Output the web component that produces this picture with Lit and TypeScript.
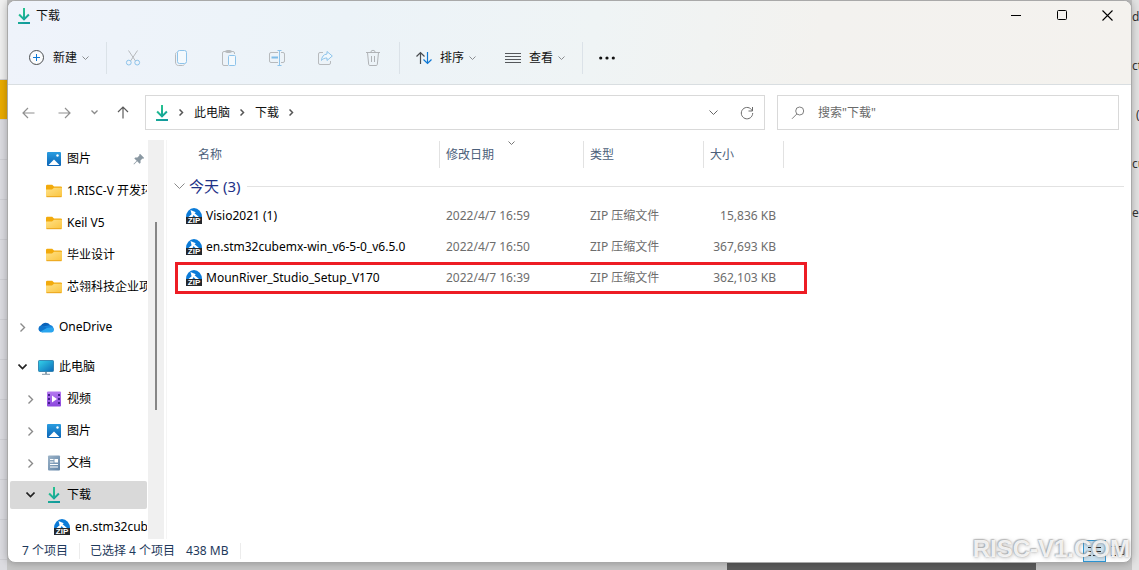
import { LitElement, html, svg, css, nothing, TemplateResult } from "lit";
import { customElement, property, state } from "lit/decorators.js";
import { classMap } from "lit/directives/class-map.js";

const glyph = (w: number, h: number, body: unknown) =>
  html`<svg width=${w} height=${h} viewBox="0 0 ${w} ${h}" fill="none" aria-hidden="true">${body}</svg>`;

const chevron = (dir: "down" | "right", size: number, color: string, weight = 1) => {
  const h = size / 2;
  const d = dir === "down" ? `M0.5 0.5 L${h + 0.5} ${h + 0.5} L${size + 0.5} 0.5` : `M0.5 0.5 L${h + 0.5} ${h + 0.5} L0.5 ${size + 0.5}`;
  return dir === "down"
    ? glyph(size + 1, h + 2, svg`<path d=${d} stroke=${color} stroke-width=${weight} />`)
    : glyph(h + 2, size + 1, svg`<path d=${d} stroke=${color} stroke-width=${weight} />`);
};

const icons: Record<string, () => TemplateResult> = {
  download: () => glyph(14, 16, svg`
    <defs><linearGradient id="dl" x1="0" y1="0" x2="0.6" y2="1"><stop offset="0" stop-color="#2bcf8c" /><stop offset="1" stop-color="#129a9c" /></linearGradient></defs>
    <path fill="url(#dl)" d="M6 0h2v9l3.200-3.200 1.400 1.400L7 12.800 1.400 7.200l1.400-1.400L6 9zM1 14h12v2H1z" />`),
  plus: () => glyph(16, 16, svg`<circle cx="7.500" cy="7.500" r="7" stroke="#4a4d50" fill="#fbfcfd" /><path d="M7.500 4v7M4 7.500h7" stroke="#0f78d4" />`),
  cut: () => glyph(16, 18, svg`<path d="M3.500 1.500 10.500 12M12.500 1.500 5.500 12" stroke="#b7babd" /><circle cx="3.800" cy="13.600" r="2.400" stroke="#8dc3ea" /><circle cx="12.200" cy="13.600" r="2.400" stroke="#8dc3ea" />`),
  copy: () => glyph(16, 18, svg`<path d="M3.500 3.500C2.500 4 2.500 4.500 2.500 5.500V13c0 2 1 3.500 3 3.500h4c1 0 1.500-.5 2-1" stroke="#b7babd" /><rect x="4.500" y="1.500" width="9" height="13" rx="2" stroke="#8dc3ea" fill="#f4f9fd" />`),
  paste: () => glyph(16, 18, svg`<path d="M7 16.500H3A1.500 1.500 0 0 1 1.500 15V4A1.500 1.500 0 0 1 3 2.500h9A1.500 1.500 0 0 1 13.500 4v1" stroke="#b7babd" /><rect x="4.500" y="1.500" width="6" height="2" rx="1" stroke="#b7babd" /><rect x="7.500" y="6.500" width="7" height="10" rx="1" stroke="#8dc3ea" fill="#f4f9fd" />`),
  rename: () => glyph(18, 18, svg`<path d="M10 3.500H3A1.500 1.500 0 0 0 1.500 5v7A1.500 1.500 0 0 0 3 13.500h7M13 3.500h2A1.500 1.500 0 0 1 16.500 5v7a1.500 1.500 0 0 1-1.500 1.500h-2" stroke="#b7babd" /><path d="M11.500 1.500v15M9.500 1.500h4M9.500 16.500h4" stroke="#8dc3ea" /><path d="M3.500 8.500H10" stroke="#7fbce8" stroke-width="2" />`),
  share: () => glyph(16, 18, svg`<path d="M6 3.500H3A1.500 1.500 0 0 0 1.500 5v9A1.500 1.500 0 0 0 3 15.500h9a1.500 1.500 0 0 0 1.500-1.500v-2" stroke="#b7babd" /><path d="M10 2.500 15.300 7 10 11.500V9C7.500 9 5.800 9.800 4.500 11.500 4.700 8 6.500 5.300 10 5z" stroke="#8dc3ea" fill="#f0f8fd" stroke-linejoin="round" />`),
  trash: () => glyph(16, 18, svg`<path d="M1 3.500h14M5.800 3.500a2.200 2.200 0 0 1 4.400 0M2.500 3.500l1.200 12a1.200 1.200 0 0 0 1.200 1h6.200a1.200 1.200 0 0 0 1.200-1l1.200-12M6.500 7v6M9.500 7v6" stroke="#b0b3b6" />`),
  sort: () => glyph(16, 14, svg`<path d="M4.500 13V1.500M.5 5.500l4-4 4 4" stroke="#4a4d50" stroke-width="1.200" /><path d="M11.500 1v11.500M7.500 8.500l4 4 4-4" stroke="#0f78d4" stroke-width="1.200" />`),
  list: () => glyph(16, 14, svg`<path d="M0 2.500h16M0 5.500h16M0 8.500h16M0 11.500h16" stroke="#55585b" />`),
  more: () => glyph(16, 4, svg`<circle cx="1.700" cy="2" r="1.600" fill="#111" /><circle cx="8" cy="2" r="1.600" fill="#111" /><circle cx="14.300" cy="2" r="1.600" fill="#111" />`),
  back: () => glyph(13, 12, svg`<path d="M12.500 6H1M6 1 1 6l5 5" stroke="#909090" stroke-width="1.200" />`),
  forward: () => glyph(13, 12, svg`<path d="M.5 6H12M7 1l5 5-5 5" stroke="#909090" stroke-width="1.200" />`),
  up: () => glyph(12, 13, svg`<path d="M6 12.500V1M1 6l5-5 5 5" stroke="#5c5c5c" stroke-width="1.200" />`),
  refresh: () => glyph(14, 14, svg`<path d="M12.200 4.800A5.700 5.700 0 1 0 12.700 7M12.500 1v4h-4" stroke="#6a6a6a" />`),
  search: () => glyph(14, 14, svg`<circle cx="8.700" cy="5" r="4" stroke="#808080" /><path d="M5.900 7.900 1 12.800" stroke="#808080" />`),
  picture: () => glyph(16, 16, svg`
    <defs><linearGradient id="pic" x1="0" y1="0" x2="0" y2="1"><stop offset="0" stop-color="#2a9de0" /><stop offset="1" stop-color="#0a63b5" /></linearGradient></defs>
    <rect x="1" y="1" width="14" height="14" rx="1" fill="url(#pic)" /><path d="M2.500 14 8 8.500l5.500 5.500z" fill="#fff" /><circle cx="11.500" cy="4.500" r="1.200" fill="#fff" />`),
  folder: () => glyph(16, 16, svg`
    <defs><linearGradient id="fol" x1="0" y1="0" x2="1" y2="1"><stop offset="0" stop-color="#ffe187" /><stop offset="1" stop-color="#fac43f" /></linearGradient></defs>
    <path d="M0 3a1.200 1.200 0 0 1 1.200-1.200h5L8 3.500h6.800A1.200 1.200 0 0 1 16 4.700V8H0z" fill="#f2aa0c" /><path d="M0 6.500h6L8 4.800h7.200a.8.8 0 0 1 .8.800V13a1 1 0 0 1-1 1H1a1 1 0 0 1-1-1z" fill="url(#fol)" /><path d="M.5 13.700h15" stroke="#eba41a" />`),
  cloud: () => glyph(16, 16, svg`<path d="M4 13.200A3.700 3.700 0 0 1 3.200 6.300 5.200 5.200 0 0 1 12 6l1 6z" fill="#0a62b8" /><path d="M5 7.500 12.500 6a4 4 0 0 1 1.500 7H8z" fill="#1683dc" /><path d="M0.500 9.500A3.500 3.500 0 0 1 4 6.500c2 0 3.500 1.500 5 2.500l-6 4C1.500 12.500.3 11.200.5 9.500z" fill="#0f74cc" /><path d="M2.500 12.500 9 9l5-.8A2.700 2.700 0 0 1 13.500 13.500H4.500a3 3 0 0 1-2-1z" fill="#2aa5ee" />`),
  monitor: () => glyph(16, 16, svg`
    <defs><linearGradient id="mon" x1="0" y1="0" x2="1" y2="1"><stop offset="0" stop-color="#33d3ea" /><stop offset="1" stop-color="#0c69b8" /></linearGradient></defs>
    <rect x="0.500" y="1.500" width="15" height="11" rx=".8" fill="url(#mon)" stroke="#2176a6" stroke-width=".8" /><path d="M7 13h2v2H7z" fill="#90a4b0" /><path d="M4 15.300h8" stroke="#8497a5" />`),
  video: () => glyph(16, 16, svg`
    <defs><linearGradient id="vid" x1="0" y1="0" x2="0" y2="1"><stop offset="0" stop-color="#b57af0" /><stop offset="1" stop-color="#8b46dd" /></linearGradient></defs>
    <rect x="1" y="0.500" width="14" height="15" rx="1" fill="url(#vid)" /><path d="M2 3h2v2H2zm0 4h2v2H2zm0 4h2v2H2zM12 3h2v2h-2zm0 4h2v2h-2zm0 4h2v2h-2z" fill="#43208c" /><path d="M6 4.500 11 8l-5 3.500z" fill="#fff" />`),
  document: () => glyph(16, 16, svg`
    <defs><linearGradient id="doc" x1="0" y1="0" x2="1" y2="1"><stop offset="0" stop-color="#9db4c8" /><stop offset="1" stop-color="#5f82a6" /></linearGradient></defs>
    <rect x="2" y="0.500" width="12" height="15" rx="1" fill="url(#doc)" /><path d="M4 4.500h3.500M4 7h3.500M4 9.500h8M4 12h8" stroke="#fff" /><path d="M8.500 4h3.500v3.500H8.500z" fill="#fff" />`),
  pin: () => glyph(12, 12, svg`<path d="M7 .8 11.200 5l-1 .8-.7-.2-2 2 .1 2.200-1 .9-2.400-2.400L1 11.500l-.5-.5 3.200-3.200L1.300 5.400l.9-1 2.200.1 2-2-.2-.7z" fill="#8a98a2" />`),
  zip: () => glyph(16, 16, svg`
    <path d="M0 9A8 9 0 0 1 16 9z" fill="#0b7bd8" /><path d="M4.500 2 9.800 4.300 8.600 5.200 13 9H9.500L7.500 7 6.500 9H2.500L5.600 6.200z" fill="#fff" />
    <rect x="0" y="9" width="16" height="7" fill="#25282c" /><text x="8" y="15" text-anchor="middle" font-family="Liberation Sans" font-weight="700" font-size="8" fill="#fff">ZIP</text>`),
  minimize: () => glyph(10, 11, svg`<path d="M0 5.500h10" stroke="#000" />`),
  maximize: () => glyph(10, 11, svg`<rect x=".5" y=".5" width="9" height="9" rx="1" stroke="#000" />`),
  close: () => glyph(12, 11, svg`<path d="M.5.500l10 10M10.500.500l-10 10" stroke="#000" stroke-width="1.100" />`),
  details: () => glyph(14, 14, svg`<path d="M0 3.500h3M5 3.500h8M0 7.500h3M5 7.500h8M0 11.500h3M5 11.500h8" stroke="#222" />`),
  tiles: () => glyph(14, 12, svg`<path d="M0 1.500h5M8 1.500h5v8H8zM0 10.500h5" stroke="#222" />`),
};

interface TreeNode { label: string; icon: string; depth: number; open?: boolean; pinned?: boolean; leaf?: boolean; gap?: boolean; selected?: boolean }

const TREE: TreeNode[] = [
  { label: "图片", icon: "picture", depth: 1, leaf: true, pinned: true },
  { label: "1.RISC-V 开发环境", icon: "folder", depth: 1, leaf: true },
  { label: "Keil V5", icon: "folder", depth: 1, leaf: true },
  { label: "毕业设计", icon: "folder", depth: 1, leaf: true },
  { label: "芯翎科技企业项目", icon: "folder", depth: 1, leaf: true },
  { label: "OneDrive", icon: "cloud", depth: 0, gap: true },
  { label: "此电脑", icon: "monitor", depth: 0, gap: true, open: true },
  { label: "视频", icon: "video", depth: 1 },
  { label: "图片", icon: "picture", depth: 1 },
  { label: "文档", icon: "document", depth: 1 },
  { label: "下载", icon: "download", depth: 1, open: true, selected: true },
  { label: "en.stm32cubemx", icon: "zip", depth: 2, leaf: true },
];

const FILES = [
  { name: "Visio2021 (1)", date: "2022/4/7 16:59", type: "ZIP 压缩文件", size: "15,836 KB" },
  { name: "en.stm32cubemx-win_v6-5-0_v6.5.0", date: "2022/4/7 16:50", type: "ZIP 压缩文件", size: "367,693 KB" },
  { name: "MounRiver_Studio_Setup_V170", date: "2022/4/7 16:39", type: "ZIP 压缩文件", size: "362,103 KB", marked: true },
];

const shared = css`
  :host { display: block; }
  * { box-sizing: border-box; }
  svg { display: block; flex: none; }
  button { font: inherit; color: inherit; background: none; border: 0; padding: 0; margin: 0; display: flex; align-items: center; white-space: nowrap; }
`;

@customElement("command-bar")
export class CommandBar extends LitElement {
  static styles = [shared, css`
    .bar { display: flex; align-items: center; height: 54px; padding: 2px 7px 0; }
    .labelled { padding: 0 14px; gap: 8px; height: 32px; }
    .caption { display: grid; grid-template-columns: auto 8px; align-items: center; column-gap: 5px; }
    .tool { width: 48px; height: 32px; justify-content: center; }
    .more { width: 44px; }
    .rule { width: 1px; height: 32px; margin: 0 2px; background: #dbe2e8; }
  `];

  private labelled(icon: string, text: string) {
    return html`<button class="labelled">${icons[icon]()}<span class="caption">${text}${chevron("down", 6, "#8a8d90")}</span></button>`;
  }

  render() {
    const tools = [["cut", "剪切"], ["copy", "复制"], ["paste", "粘贴"], ["rename", "重命名"], ["share", "共享"], ["trash", "删除"]];
    return html`<div class="bar" role="toolbar">
      ${this.labelled("plus", "新建")}
      <span class="rule"></span>
      ${tools.map(([icon, name]) => html`<button class="tool" disabled aria-label=${name}>${icons[icon]()}</button>`)}
      <span class="rule"></span>
      ${this.labelled("sort", "排序")}${this.labelled("list", "查看")}
      <span class="rule"></span>
      <button class="tool more" aria-label="更多">${icons.more()}</button>
    </div>`;
  }
}

@customElement("address-bar")
export class AddressBar extends LitElement {
  static styles = [shared, css`
    .row { display: flex; align-items: center; padding: 10px 12px 10px 2px; }
    .nav { height: 32px; width: 36px; justify-content: center; }
    .history { width: 24px; }
    .up { width: 34px; margin-right: 5px; }
    .fields { flex: 1; display: grid; grid-template-columns: minmax(0, 620fr) minmax(0, 342fr); column-gap: 12px; }
    .field { height: 35px; border: 1px solid #d9d9d9; display: flex; align-items: center; background: #fff; min-width: 0; }
    .path { padding-left: 9px; }
    .find { padding-left: 13px; gap: 13px; }
    .step { width: 25px; height: 24px; justify-content: center; }
    .crumb { color: #111; text-decoration: none; white-space: nowrap; }
    .fill { flex: 1; }
    .end { width: 34px; height: 32px; justify-content: center; }
    input { flex: 1; min-width: 0; border: 0; outline: 0; padding: 0; background: none; font: inherit; }
    input::placeholder { color: #6a6a6a; opacity: 1; }
    label { display: flex; }
  `];

  render() {
    const step = html`<button class="step" aria-label="展开">${chevron("right", 6, "#555", 1.5)}</button>`;
    return html`<div class="row">
      <button class="nav" aria-label="返回">${icons.back()}</button>
      <button class="nav" aria-label="前进">${icons.forward()}</button>
      <button class="nav history" aria-label="最近位置">${chevron("down", 6, "#8a8a8a", 1.3)}</button>
      <button class="nav up" aria-label="上移">${icons.up()}</button>
      <div class="fields">
        <nav class="field path">
          ${icons.download()}${step}<a class="crumb" href="#">此电脑</a>${step}<a class="crumb" href="#">下载</a>${step}
          <span class="fill"></span>
          <button class="end" aria-label="历史">${chevron("down", 8, "#666")}</button>
          <button class="end" aria-label="刷新">${icons.refresh()}</button>
        </nav>
        <div class="field find">
          <label for="q" aria-label="搜索">${icons.search()}</label>
          <input id="q" type="text" placeholder='搜索"下载"' />
        </div>
      </div>
    </div>`;
  }
}

@customElement("folder-tree")
export class FolderTree extends LitElement {
  static styles = [shared, css`
    :host { display: flex; min-height: 0; overflow: hidden; }
    .list { width: 140px; flex: none; padding: 3px 1px 0 2px; overflow: hidden; }
    .node { display: flex; width: 100%; height: 28px; margin: 2px 0 4px; border-radius: 2px; overflow: hidden; text-align: left; color: #000; padding-left: 4px; }
    .depth1 { padding-left: 12px; }
    .depth2 { padding-left: 20px; }
    .gap { margin-top: 12px; }
    .selected { background: #d9d9d9; }
    .twist { width: 17px; margin-right: 7px; display: flex; justify-content: center; flex: none; }
    .icon { width: 16px; margin-right: 5px; display: flex; justify-content: center; flex: none; }
    .label { flex: 1; overflow: hidden; }
    .pin { margin-right: 2px; }
    .track { width: 16px; background: #f0f0f0; display: flex; flex-direction: column; align-items: center; }
    .before { flex: 82; }
    .thumb { flex: 188; width: 2px; background: #868686; }
    .after { flex: 129; }
  `];

  render() {
    return html`<div class="list">${TREE.map((n) => html`
      <button class=${classMap({ node: true, [`depth${n.depth}`]: true, gap: !!n.gap, selected: !!n.selected })}>
        <span class="twist">${n.leaf ? nothing : n.open ? chevron("down", 8, "#222", 1.6) : chevron("right", 8, "#8a8a8a", 1.4)}</span>
        <span class="icon">${icons[n.icon]()}</span><span class="label">${n.label}</span>${n.pinned ? html`<span class="pin">${icons.pin()}</span>` : nothing}
      </button>`)}</div>
      <div class="track"><span class="before"></span><span class="thumb"></span><span class="after"></span></div>`;
  }
}

@customElement("file-list")
export class FileList extends LitElement {
  @state() private expanded = true;

  static styles = [shared, css`
    :host { min-width: 0; border-left: 1px solid #f5f5f5; }
    table { width: 100%; border-collapse: separate; border-spacing: 0; table-layout: fixed; }
    .c-name { width: 272px; } .c-date { width: 144px; } .c-type { width: 120px; } .c-size { width: 80px; }
    .head th { height: 29px; padding: 0; font-weight: 400; text-align: left; color: #4c607a; }
    .cell { display: flex; align-items: center; height: 27px; padding-left: 6px; border-left: 1px solid #e2e2e2; }
    .first { border-left: 0; padding-left: 31px; }
    .dated { position: relative; }
    .arrow { position: absolute; top: 0; left: calc(50% - 4px); }
    .group { padding: 0 7px 0 7px; height: 31px; font-weight: 400; }
    .toggle { width: 100%; font-size: 15px; color: #1e3287; gap: 4px; height: 31px; padding-top: 3px; }
    .line { flex: 1; height: 1px; background: #e2e2e2; margin-left: 3px; }
    .file td { height: 31px; padding: 0 7px; color: #6d6d6d; white-space: nowrap; }
    .file .title { padding-left: 19px; color: #000; position: relative; }
    .name { display: flex; align-items: center; gap: 4px; }
    .file .size { text-align: right; }
    .mark { position: absolute; top: 0; left: 8px; width: 632px; height: 32px; border: 3px solid #ed1c24; pointer-events: none; }
  `];

  render() {
    return html`<table>
      <colgroup><col class="c-name" /><col class="c-date" /><col class="c-type" /><col class="c-size" /><col /></colgroup>
      <thead><tr class="head">
        <th><div class="cell first">名称</div></th>
        <th><div class="cell dated">修改日期<span class="arrow">${chevron("down", 6, "#777")}</span></div></th>
        <th><div class="cell">类型</div></th>
        <th><div class="cell">大小</div></th>
        <th aria-hidden="true"><div class="cell"></div></th>
      </tr></thead>
      <tbody>
        <tr><th class="group" colspan="5" scope="rowgroup">
          <button class="toggle" aria-expanded=${this.expanded} @click=${() => (this.expanded = !this.expanded)}>${chevron("down", 10, "#8a8a8a")}今天 (3)<span class="line"></span></button>
        </th></tr>
        ${this.expanded ? FILES.map((f) => html`<tr class="file">
          <td class="title"><span class="name">${icons.zip()}${f.name}</span>${f.marked ? html`<span class="mark"></span>` : nothing}</td>
          <td>${f.date}</td><td>${f.type}</td><td class="size">${f.size}</td><td></td>
        </tr>`) : nothing}
      </tbody>
    </table>`;
  }
}

@customElement("app-root")
export class AppRoot extends LitElement {
  @property() heading = "下载";

  static styles = [shared, css`
    :host { font: 12px/16px "Noto Sans", "Noto Sans CJK SC", sans-serif; color: #111; }
    .desktop { height: 100vh; min-height: 400px; display: grid; grid-template: minmax(0, 1fr) 7px / 7px minmax(0, 1fr) 7px; overflow: hidden; background: #c6c6c6; }
    .left { grid-area: 1 / 1 / 3 / 2; background: linear-gradient(#f0f0f0 79px, #d0d0d4 79px 80px, #eaab00 80px 119px, transparent 119px), repeating-linear-gradient(#dcdce1 0 39px, #cfcfd4 39px 40px); }
    .right { grid-area: 1 / 3 / 3 / 4; background: #e3e3e3; overflow: hidden; color: #333; line-height: 49px; margin-top: -8px; white-space: nowrap; }
    .right .far { padding-left: 4px; }
    .below { grid-area: 2 / 2; display: grid; grid-template-columns: 720fr 309fr 96fr; }
    .dark { background: #5c5c5c; }
    .window { grid-area: 1 / 2; display: flex; flex-direction: column; background: #fff; border: 1px solid #a9a9a9; border-radius: 8px; overflow: hidden; position: relative; box-shadow: 0 0 8px rgba(0, 0, 0, 0.28); }
    .chrome { background: linear-gradient(100deg, #eff3fb, #ecf3f8 30%, #eff4f5 52%, #f3f2ef 72%, #f4f2ee); border-bottom: 1px solid #d9dee1; }
    .title { display: flex; align-items: center; height: 29px; padding-left: 9px; gap: 5px; }
    .name { flex: 1; font-weight: 400; font-size: 12px; margin: 0; }
    .control { width: 46px; height: 29px; justify-content: center; }
    .controls { display: flex; }
    .body { flex: 1; min-height: 0; display: grid; grid-template-columns: 156px minmax(0, 1fr); column-gap: 2px; }
    .status { display: flex; align-items: center; height: 23px; padding: 0 2px 0 14px; color: #1e395b; white-space: nowrap; }
    .bit { padding-right: 11px; }
    .ruled { border-right: 1px solid #ececec; margin-right: 10px; }
    .fill { flex: 1; }
    .view { width: 23px; height: 22px; justify-content: center; }
    .on { border: 1px solid #2b93d1; background: #cce4f3; }
    .watermark { position: absolute; right: 1px; bottom: 0; font: 700 24px/26px "Liberation Sans", sans-serif; color: rgba(255, 255, 255, 0.85); text-shadow: 0 0 2px rgba(120, 120, 120, 0.6), -1px -1px 1px rgba(150, 150, 150, 0.5), 1px 1px 4px rgba(150, 150, 150, 0.5); pointer-events: none; }
  `];

  render() {
    return html`<div class="desktop">
      <div class="left"></div>
      <div class="right"><div>do</div><div>ct</div><div class="far">(</div><div>cu</div><div>er</div></div>
      <div class="below"><span></span><span class="dark"></span></div>
      <main class="window">
        <header class="chrome">
          <div class="title">
            ${icons.download()}<h1 class="name">${this.heading}</h1>
            <div class="controls">
              <button class="control" aria-label="最小化">${icons.minimize()}</button>
              <button class="control" aria-label="最大化">${icons.maximize()}</button>
              <button class="control" aria-label="关闭">${icons.close()}</button>
            </div>
          </div>
          <command-bar></command-bar>
        </header>
        <address-bar></address-bar>
        <div class="body"><folder-tree></folder-tree><file-list></file-list></div>
        <footer class="status">
          <span class="bit ruled">7 个项目</span><span class="bit">已选择 4 个项目</span><span class="bit ruled">438 MB</span>
          <span class="fill"></span>
          <button class="view on" aria-label="详细信息">${icons.details()}</button>
          <button class="view" aria-label="大图标">${icons.tiles()}</button>
        </footer>
        <div class="watermark">RISC-V1.COM</div>
      </main>
    </div>`;
  }
}
